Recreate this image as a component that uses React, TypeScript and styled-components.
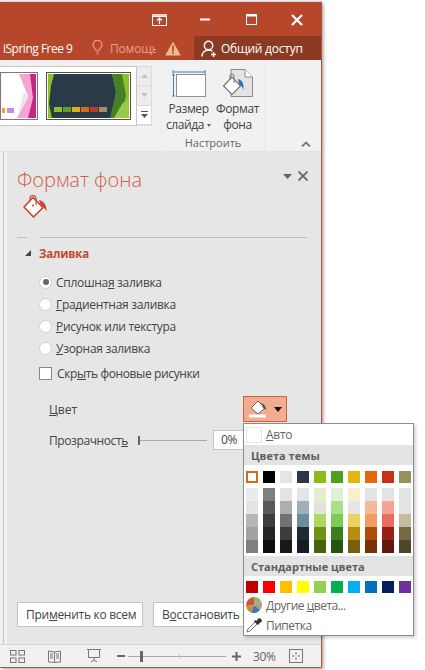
import React from "react";
import styled, { createGlobalStyle } from "styled-components";

const Global = createGlobalStyle`
  html, body { margin: 0; padding: 0; background: #fff; }
  body { font-family: "Open Sans", "Noto Sans", "Liberation Sans", sans-serif; }
  #root { width: 425px; height: 670px; }
  * { box-sizing: border-box; }
  u { text-underline-offset: 1px; text-decoration-thickness: 1px; }
`;

const Page = styled.div`
  position: relative;
  width: 425px;
  height: 670px;
  overflow: hidden;
  background: #fff;
  padding-top: 2px;
`;
const Win = styled.div`
  width: 322px;
  height: 666px;
  display: flex;
  flex-direction: column;
  border-right: 1px solid #a9553f;
  border-bottom: 1px solid #a9553f;
  border-top: 1px solid #b7472a;
  box-shadow: 2px 2px 3px rgba(90, 60, 50, 0.35), 0 -1px 2px rgba(90, 60, 50, 0.3);
  background: #e6e6e6;
`;
const TitleBar = styled.div`
  height: 33px;
  background: #b7472a;
  display: flex;
  align-items: center;
  justify-content: flex-end;
  padding-right: 1px;
  color: #fff;
`;
const WinButton = styled.div<{ $w: number }>`
  width: ${(p) => p.$w}px;
  display: flex;
  justify-content: center;
  align-items: center;
`;
const TabRow = styled.div`
  height: 24px;
  background: #b7472a;
  display: flex;
  align-items: stretch;
  font-size: 12px;
  color: #fff;
`;
const TabText = styled.div`
  width: 90px;
  padding-left: 3px;
  display: flex;
  align-items: center;
  letter-spacing: -0.5px;
  white-space: nowrap;
`;
const Tell = styled.div`
  width: 66px;
  display: flex;
  align-items: center;
  gap: 7px;
  padding-left: 2px;
  color: #e3a090;
  overflow: hidden;
  white-space: nowrap;
  letter-spacing: -0.2px;
  svg {
    flex: none;
  }
`;
const WarnBox = styled.div`
  width: 38px;
  display: flex;
  align-items: center;
  padding-left: 9px;
`;
const Share = styled.div`
  flex: 1;
  background: #8d3a22;
  display: flex;
  align-items: center;
  gap: 3px;
  padding-left: 7px;
  white-space: nowrap;
  letter-spacing: -0.25px;
  svg {
    flex: none;
  }
`;
const Ribbon = styled.div`
  height: 92px;
  background: #f1f1f1;
  display: flex;
  align-items: flex-start;
  border-bottom: 1px solid #e4e4e4;
`;
const Gallery = styled.div`
  margin-top: 6px;
  width: 137px;
  height: 60px;
  background: #fff;
  border: 1px solid #c6c6c6;
  border-left: none;
  display: flex;
  align-items: center;
  justify-content: flex-end;
  gap: 8px;
  padding-right: 5px;
`;
const ThumbFrame = styled.div<{ $w: number; $line: string }>`
  width: ${(p) => p.$w}px;
  height: 48px;
  border: 1px solid ${(p) => p.$line};
  padding: 1px;
  display: flex;
  overflow: hidden;
`;
const Scroller = styled.div`
  margin-top: 6px;
  width: 15px;
  height: 60px;
  display: flex;
  flex-direction: column;
  border: 1px solid #dcdcdc;
  border-left: none;
  color: #c4c4c4;
`;
const ScrollCell = styled.div<{ $active?: boolean }>`
  flex: 1;
  display: flex;
  align-items: center;
  justify-content: center;
  background: ${(p) => (p.$active ? "#fff" : "#ececec")};
  border-bottom: 1px solid #dcdcdc;
`;
const Group = styled.div`
  margin-left: 9px;
  height: 91px;
  width: 104px;
  border-left: 1px solid #ebebeb;
  border-right: 1px solid #ebebeb;
  display: flex;
  flex-direction: column;
  align-items: center;
`;
const GroupTools = styled.div`
  flex: 1;
  display: flex;
`;
const Tool = styled.div`
  width: 49px;
  display: flex;
  flex-direction: column;
  align-items: center;
  padding-top: 6px;
  font-size: 12px;
  line-height: 16px;
  color: #444;
  text-align: center;
  letter-spacing: -0.4px;
  white-space: nowrap;
`;
const ToolIcon = styled.div`
  height: 35px;
  display: flex;
  align-items: center;
  justify-content: center;
`;
const SmallCaret = styled.span`
  display: inline-block;
  width: 0;
  height: 0;
  margin-left: 3px;
  vertical-align: 2px;
  border-left: 2.5px solid transparent;
  border-right: 2.5px solid transparent;
  border-top: 3px solid #666;
`;
const GroupName = styled.div`
  font-size: 11px;
  line-height: 16px;
  color: #666;
`;
const Collapse = styled.div`
  margin: 81px 0 0 36px;
  color: #777;
  display: flex;
`;
const Body = styled.div`
  flex: 1;
  display: flex;
  min-height: 0;
`;
const Strip = styled.div`
  width: 7px;
  background: #f1f1f1;
  position: relative;
  &::after {
    content: "";
    position: absolute;
    left: 3px;
    top: 0;
    bottom: 0;
    width: 1px;
    background: #c3c3c3;
  }
`;
const Pane = styled.div`
  flex: 1;
  display: flex;
  flex-direction: column;
  padding: 0 14px 0 10px;
  background: #e6e6e6;
  color: #444;
  font-size: 12px;
`;
const PaneHead = styled.div`
  display: flex;
  justify-content: space-between;
  align-items: flex-start;
  height: 43px;
  padding-top: 14px;
`;
const PaneTitle = styled.div`
  font-size: 20px;
  line-height: 28px;
  font-weight: 300;
  color: #cf6048;
  letter-spacing: 0;
  white-space: nowrap;
`;
const PaneControls = styled.div`
  display: flex;
  align-items: center;
  gap: 6px;
  padding-top: 5px;
  margin-right: -1px;
  color: #666;
`;
const FillIconWrap = styled.div`
  height: 42px;
  padding-left: 5px;
  display: flex;
  align-items: flex-start;
`;
const Rule = styled.div`
  display: flex;
  gap: 13px;
  height: 1px;
`;
const RuleBit = styled.div<{ $w?: number }>`
  background: #bdbdbd;
  flex: ${(p) => (p.$w ? `0 0 ${p.$w}px` : "1")};
`;
const SectionHead = styled.div`
  display: flex;
  align-items: center;
  gap: 8px;
  height: 16px;
  margin: 7px 0 0 8px;
  font-weight: 700;
  color: #c2492d;
  font-size: 11.5px;
  letter-spacing: -0.2px;
`;
const Tri = styled.div`
  width: 0;
  height: 0;
  border-left: 6px solid transparent;
  border-bottom: 6px solid #444;
`;
const Options = styled.div`
  margin-top: 10px;
  padding-left: 22px;
  display: flex;
  flex-direction: column;
`;
const OptionRow = styled.div`
  height: 22px;
  display: flex;
  align-items: center;
  gap: 5px;
  white-space: nowrap;
  letter-spacing: -0.3px;
`;
const Radio = styled.div<{ $on?: boolean }>`
  width: 13px;
  height: 13px;
  border-radius: 50%;
  background: #fff;
  border: 1px solid #d0d0d0;
  display: flex;
  align-items: center;
  justify-content: center;
  margin-right: -1px;
  &::after {
    content: "";
    width: 6px;
    height: 6px;
    border-radius: 50%;
    background: ${(p) => (p.$on ? "#666" : "transparent")};
  }
`;
const CheckRow = styled(OptionRow)`
  margin-top: 3px;
  letter-spacing: -0.38px;
`;
const Check = styled.div`
  width: 13px;
  height: 13px;
  background: #fff;
  border: 1px solid #888;
`;
const ColorRow = styled.div`
  margin-top: 12px;
  height: 26px;
  padding-left: 32px;
  display: flex;
  align-items: center;
  justify-content: space-between;
  padding-right: 20px;
`;
const ColorButton = styled.div`
  width: 44px;
  height: 26px;
  background: #f5ab8f;
  border: 1px solid #c9643e;
  display: flex;
  align-items: center;
  justify-content: center;
  gap: 4px;
`;
const Caret = styled.div`
  width: 0;
  height: 0;
  border-left: 4px solid transparent;
  border-right: 4px solid transparent;
  border-top: 5px solid #111;
`;
const AlphaRow = styled.div`
  margin-top: 8px;
  height: 20px;
  padding-left: 32px;
  display: flex;
  align-items: center;
  letter-spacing: -0.4px;
`;
const AlphaLabel = styled.div`
  width: 89px;
  white-space: nowrap;
`;
const Slider = styled.div`
  width: 69px;
  height: 1px;
  background: #a9a9a9;
  position: relative;
  margin-right: 6px;
  &::before {
    content: "";
    position: absolute;
    left: 0;
    top: -4px;
    width: 2px;
    height: 9px;
    background: #666;
  }
`;
const AlphaInput = styled.div`
  width: 36px;
  height: 20px;
  background: #fff;
  border: 1px solid #c4c4c4;
  padding-left: 7px;
  line-height: 18px;
`;
const Actions = styled.div`
  margin-top: auto;
  margin-bottom: 17px;
  display: flex;
  gap: 10px;
  white-space: nowrap;
`;
const ActionButton = styled.div<{ $w: number }>`
  width: ${(p) => p.$w}px;
  height: 25px;
  flex: none;
  background: #fff;
  border: 1px solid #c4c4c4;
  display: flex;
  align-items: center;
  padding-left: 8px;
  letter-spacing: -0.28px;
`;
const Status = styled.div`
  height: 23px;
  background: #f1f1f1;
  border-top: 1px solid #d4d4d4;
  display: flex;
  align-items: center;
  color: #666;
`;
const StatusIcon = styled.div<{ $ml: number }>`
  margin-left: ${(p) => p.$ml}px;
  display: flex;
`;
const Zoom = styled.div`
  margin-left: 3px;
  width: 98px;
  height: 1px;
  background: #aaa;
  position: relative;
  &::before {
    content: "";
    position: absolute;
    left: 12px;
    top: -5px;
    width: 3px;
    height: 11px;
    background: #666;
  }
  &::after {
    content: "";
    position: absolute;
    left: 51px;
    top: -2px;
    width: 1px;
    height: 5px;
    background: #c0c0c0;
  }
`;
const Pct = styled.div`
  font-size: 12px;
  letter-spacing: -0.3px;
  margin-left: 12px;
`;
const Popup = styled.div`
  position: absolute;
  left: 243px;
  top: 423px;
  width: 171px;
  height: 213px;
  background: #fff;
  border: 1px solid #8c8c8c;
  box-shadow: 2px 2px 3px rgba(0, 0, 0, 0.18);
  display: flex;
  flex-direction: column;
  font-size: 12px;
  color: #666;
`;
const AutoRow = styled.div`
  height: 21px;
  display: flex;
  align-items: center;
  gap: 4px;
  padding-left: 2px;
  letter-spacing: -0.3px;
`;
const AutoBox = styled.div`
  width: 16px;
  height: 16px;
  border: 1px solid #e6e6e6;
`;
const MenuHead = styled.div`
  height: 20px;
  background: #e3e3e3;
  display: flex;
  align-items: center;
  padding-left: 7px;
  font-weight: 700;
  font-size: 11px;
  color: #5e5e5e;
`;
const SwatchRow = styled.div<{ $top: number }>`
  margin-top: ${(p) => p.$top}px;
  padding-left: 2px;
  display: flex;
  gap: 5px;
`;
const Swatch = styled.div<{ $c: string; $sel?: boolean }>`
  width: 12px;
  height: 12px;
  flex: none;
  background: ${(p) => p.$c};
  border: ${(p) => (p.$sel ? "2px solid #d9691f" : "none")};
`;
const ShadeGrid = styled.div`
  margin: 5px 0 3px;
  padding-left: 2px;
  display: flex;
  gap: 5px;
`;
const ShadeColumn = styled.div`
  width: 12px;
  display: flex;
  flex-direction: column;
`;
const Shade = styled.div<{ $c: string }>`
  height: 13px;
  background: ${(p) => p.$c};
`;
const MenuItem = styled.div`
  height: 20px;
  display: flex;
  align-items: center;
  gap: 4px;
  padding-left: 2px;
  letter-spacing: -0.5px;
  white-space: nowrap;
`;
const MenuItems = styled.div`
  margin-top: 2px;
  display: flex;
  flex-direction: column;
`;

const Bucket = ({ size = 26, line = "#c8492e", fill = "#fff" }: { size?: number; line?: string; fill?: string }) => (
  <svg width={size} height={size} viewBox="0 0 26 26" fill="none">
    <path d="M11 2.5 L2 12 L11.5 22 L21 12.5 Z" fill={fill} stroke={line} strokeWidth="1.7" strokeLinejoin="round" />
    <path d="M8 6.5 V3.5 a3 3 0 0 1 6 0 V10" stroke={line} strokeWidth="1.2" />
    <circle cx="11" cy="10.5" r="1.1" fill={line} />
    <path d="M17 5 C22 6 25 10 24.5 17 C24 14 21.5 12.5 19.5 12 Z" fill={line} />
  </svg>
);

const themeTop = ["#fff", "#000", "#e5e5e5", "#2a3846", "#8cbb17", "#4fa01f", "#e3b50f", "#e9660f", "#c9301a", "#9a8e5a"];
const shades = [
  ["#e9ecef", "#e4e4e4", "#b6b6b6", "#a3a3a3", "#7f7f7f"],
  ["#7f7f7f", "#595959", "#3c3c3c", "#242424", "#0d0d0d"],
  ["#e3e3e3", "#aeaeae", "#727272", "#3c3c3c", "#181818"],
  ["#e2e4e6", "#9db1bd", "#6c8ca0", "#1e2b36", "#141d26"],
  ["#e5efcd", "#e2e4dc", "#b0d860", "#6c9316", "#47610e"],
  ["#dff0d6", "#a9e088", "#7dcc52", "#3c7d1e", "#275313"],
  ["#fbeecd", "#e4e6e8", "#ecd060", "#b58d12", "#7a5f0c"],
  ["#e2e3e5", "#f6b994", "#f09c64", "#b04c0a", "#763307"],
  ["#e2e3e5", "#f4a497", "#ea6d5d", "#962213", "#64170d"],
  ["#e3e3e3", "#e3e3e3", "#c4bc9c", "#75693f", "#4d462b"],
];
const standard = ["#c00000", "#ff0000", "#ffc000", "#ffff00", "#92d050", "#00b050", "#00b0f0", "#0070c0", "#002060", "#7030a0"];
const strip = ["#8fbf27", "#5aa02a", "#dcb21c", "#dd6a1c", "#bf3a20", "#a09268"];

export default function App() {
  return (
    <Page>
      <Global />
      <Win>
        <TitleBar>
          <WinButton $w={46}>
            <svg width="15" height="12" viewBox="0 0 15 12" fill="none" stroke="#fff">
              <rect x="0.5" y="2.5" width="14" height="9" />
              <path d="M0 1 H15" strokeWidth="1.5" />
              <path d="M7.5 10 V4 M5 6.5 L7.5 4 L10 6.5" strokeWidth="1.2" />
            </svg>
          </WinButton>
          <WinButton $w={46}>
            <svg width="10" height="3" viewBox="0 0 10 3">
              <rect width="10" height="2" y="0.5" fill="#fff" />
            </svg>
          </WinButton>
          <WinButton $w={46}>
            <svg width="11" height="11" viewBox="0 0 11 11" fill="none" stroke="#fff">
              <rect x="0.5" y="0.5" width="10" height="10" />
              <path d="M0 1.5 H11" strokeWidth="2" />
            </svg>
          </WinButton>
          <WinButton $w={46}>
            <svg width="12" height="12" viewBox="0 0 12 12" stroke="#fff" strokeWidth="2.2">
              <path d="M1 1 L11 11 M11 1 L1 11" />
            </svg>
          </WinButton>
        </TitleBar>
        <TabRow>
          <TabText>iSpring Free 9</TabText>
          <Tell>
            <svg width="11" height="16" viewBox="0 0 11 16" fill="none" stroke="#e3a090" strokeWidth="1.2">
              <path d="M3.5 10 C3 8 1 7 1 4.8 a4.5 4.5 0 0 1 9 0 C10 7 8 8 7.5 10 Z" />
              <path d="M4 12 H7 M4.5 14 H6.5" />
            </svg>
            <span>Помощь</span>
          </Tell>
          <WarnBox>
            <svg width="16" height="15" viewBox="0 0 16 15">
              <path d="M8 0.5 L15.8 14.5 H0.2 Z" fill="#eeb98b" />
              <rect x="7.2" y="4.5" width="1.6" height="6" fill="#9a4a26" />
              <rect x="7.2" y="11.3" width="1.6" height="1.6" fill="#9a4a26" />
            </svg>
          </WarnBox>
          <Share>
            <svg width="17" height="17" viewBox="0 0 17 17" fill="none" stroke="#fff" strokeWidth="1.4">
              <circle cx="7.5" cy="5.5" r="4.2" />
              <path d="M1 16.5 C1 12.5 4 10 7.5 10 C9 10 10.4 10.4 11.4 11.2" />
              <path d="M12.5 12 V17 M10 14.5 H15" />
            </svg>
            <span>Общий доступ</span>
          </Share>
        </TabRow>
        <Ribbon>
          <Gallery>
            <ThumbFrame $w={38} $line="#8d6d80">
              <svg width="34" height="44" viewBox="0 0 34 44">
                <rect width="34" height="44" fill="#fff" />
                <path d="M17 0 H34 V44 H15 L26 22 Z" fill="#f4a6d0" />
                <path d="M28 0 H34 V44 H26 L31 24 Z" fill="#c4277f" />
                <path d="M15 44 L26 24 L22 18 L18 34 Z" fill="#ebe5e8" />
                <rect x="0" y="34" width="3" height="5" fill="#f0a030" />
                <rect x="5" y="34" width="7" height="5" fill="#c090e0" />
              </svg>
            </ThumbFrame>
            <ThumbFrame $w={85} $line="#4c5a3a">
              <svg width="81" height="44" viewBox="0 0 81 44">
                <rect width="81" height="44" fill="#8fc029" />
                <path d="M6 0 H64 L68 18 L64 44 H4 L1 30 L3 12 Z" fill="#2b3a48" />
                <path d="M64 0 H74 L78 22 L72 44 H62 L68 18 Z" fill="#467f2a" />
                <path d="M66 44 L74 30 L81 24 V44 Z" fill="#9cc84a" />
                {strip.map((c, i) => (
                  <rect key={c} x={6 + i * 9} y="33" width="8" height="5" fill={c} />
                ))}
              </svg>
            </ThumbFrame>
          </Gallery>
          <Scroller>
            <ScrollCell>
              <svg width="7" height="4" viewBox="0 0 7 4" fill="currentColor"><path d="M3.5 0 L7 4 H0 Z" /></svg>
            </ScrollCell>
            <ScrollCell>
              <svg width="7" height="4" viewBox="0 0 7 4" fill="currentColor"><path d="M0 0 H7 L3.5 4 Z" /></svg>
            </ScrollCell>
            <ScrollCell $active>
              <svg width="7" height="7" viewBox="0 0 7 7" fill="#555"><rect width="7" height="1" /><path d="M0 3 H7 L3.5 7 Z" /></svg>
            </ScrollCell>
          </Scroller>
          <Group>
            <GroupTools>
              <Tool>
                <ToolIcon>
                  <svg width="34" height="30" viewBox="0 0 34 30" fill="none">
                    <rect x="4.5" y="5.5" width="29" height="22" fill="#fff" stroke="#8f8f8f" />
                    <path d="M1.5 3 H33 M1 1 V5 M33 1 V5 M1.5 5 V27 M0 6 H3 M0 27 H3" stroke="#4d7ea8" strokeWidth="1" />
                  </svg>
                </ToolIcon>
                <span>Размер</span>
                <span>слайда<SmallCaret /></span>
              </Tool>
              <Tool>
                <ToolIcon>
                  <svg width="32" height="32" viewBox="0 0 32 32" fill="none">
                    <path d="M9 1.5 H23 L30.5 9 V28.5 H9 Z" fill="#e4e4e4" stroke="#8a8a8a" />
                    <path d="M23 1.5 V9 H30.5" fill="#fff" stroke="#8a8a8a" />
                    <path d="M10 9 L1.5 18 L10 26.5 L18.5 18 Z" fill="#fff" stroke="#777" strokeWidth="1.2" />
                    <path d="M8 12 V8 a2 2 0 0 1 4 0 V15" stroke="#777" />
                    <path d="M16 11 C20 12 22 15 21.5 22 C20.5 19 19 17.5 17.5 17 Z" fill="#2f6fb5" />
                  </svg>
                </ToolIcon>
                <span>Формат</span>
                <span>фона</span>
              </Tool>
            </GroupTools>
            <GroupName>Настроить</GroupName>
          </Group>
          <Collapse>
            <svg width="10" height="6" viewBox="0 0 10 6" fill="none" stroke="currentColor" strokeWidth="1.8">
              <path d="M1 5.5 L5 1.5 L9 5.5" />
            </svg>
          </Collapse>
        </Ribbon>
        <Body>
          <Strip />
          <Pane>
            <PaneHead>
              <PaneTitle>Формат фона</PaneTitle>
              <PaneControls>
                <svg width="9" height="5" viewBox="0 0 9 5" fill="currentColor"><path d="M0 0 H9 L4.5 5 Z" /></svg>
                <svg width="10" height="10" viewBox="0 0 10 10" stroke="currentColor" strokeWidth="1.8"><path d="M0.5 0.5 L9.5 9.5 M9.5 0.5 L0.5 9.5" /></svg>
              </PaneControls>
            </PaneHead>
            <FillIconWrap>
              <Bucket />
            </FillIconWrap>
            <Rule>
              <RuleBit $w={10} />
              <RuleBit />
            </Rule>
            <SectionHead>
              <Tri />
              <span>Заливка</span>
            </SectionHead>
            <Options>
              <OptionRow>
                <Radio $on />
                <span>Сплошна<u>я</u> заливка</span>
              </OptionRow>
              <OptionRow>
                <Radio />
                <span><u>Г</u>радиентная заливка</span>
              </OptionRow>
              <OptionRow>
                <Radio />
                <span><u>Р</u>исунок или текстура</span>
              </OptionRow>
              <OptionRow>
                <Radio />
                <span><u>У</u>зорная заливка</span>
              </OptionRow>
              <CheckRow>
                <Check />
                <span>Скр<u>ы</u>ть фоновые рисунки</span>
              </CheckRow>
            </Options>
            <ColorRow>
              <span><u>Ц</u>вет</span>
              <ColorButton>
                <svg width="22" height="18" viewBox="0 0 22 18">
                  <path d="M10 1 L3 8 L10 14 L17 8 Z" fill="#fff" stroke="#555" strokeWidth="0.9" />
                  <path d="M13 3 C16 4 18 6 18 10 L15 8 Z" fill="#555" />
                  <rect x="1" y="14.5" width="17" height="3" fill="#fff" />
                </svg>
                <Caret />
              </ColorButton>
            </ColorRow>
            <AlphaRow>
              <AlphaLabel>Прозрачност<u>ь</u></AlphaLabel>
              <Slider />
              <AlphaInput>0%</AlphaInput>
            </AlphaRow>
            <Actions>
              <ActionButton $w={126}>При<u>м</u>енить ко всем</ActionButton>
              <ActionButton $w={130}>В<u>о</u>сстановить фон</ActionButton>
            </Actions>
          </Pane>
        </Body>
        <Status>
          <StatusIcon $ml={10}>
            <svg width="15" height="13" viewBox="0 0 15 13" fill="none" stroke="#777">
              <rect x="0.5" y="0.5" width="5.5" height="4.5" /><rect x="9" y="0.5" width="5.5" height="4.5" />
              <rect x="0.5" y="8" width="5.5" height="4.5" /><rect x="9" y="8" width="5.5" height="4.5" />
            </svg>
          </StatusIcon>
          <StatusIcon $ml={23}>
            <svg width="13" height="13" viewBox="0 0 13 13" fill="none" stroke="#777">
              <path d="M0.5 1 L6.5 2 L12.5 1 V12 L6.5 12.5 L0.5 12 Z M6.5 2 V12.5 M2 4 H5 M2 6 H5 M2 8 H5 M8 4 H11 M8 6 H11 M8 8 H11" />
            </svg>
          </StatusIcon>
          <StatusIcon $ml={26}>
            <svg width="14" height="14" viewBox="0 0 14 14" fill="none" stroke="#777">
              <path d="M0 0.5 H14 M1.5 1 V8.5 H12.5 V1 M7 8.5 V11 M4 13 L7 11 L10 13" />
            </svg>
          </StatusIcon>
          <StatusIcon $ml={16}>
            <svg width="8" height="3" viewBox="0 0 8 3"><rect width="8" height="2" fill="#666" /></svg>
          </StatusIcon>
          <Zoom />
          <StatusIcon $ml={6}>
            <svg width="9" height="9" viewBox="0 0 9 9" stroke="#666" strokeWidth="2"><path d="M4.5 0 V9 M0 4.5 H9" /></svg>
          </StatusIcon>
          <Pct>30%</Pct>
          <StatusIcon $ml={13}>
            <svg width="14" height="14" viewBox="0 0 14 14" fill="none" stroke="#777">
              <rect x="0.5" y="0.5" width="13" height="13" />
              <path d="M7 3 V5.5 M7 8.5 V11 M3 7 H5.5 M8.5 7 H11" />
            </svg>
          </StatusIcon>
        </Status>
      </Win>
      <Popup>
        <AutoRow>
          <AutoBox />
          <span><u>А</u>вто</span>
        </AutoRow>
        <MenuHead>Цвета темы</MenuHead>
        <SwatchRow $top={6}>
          {themeTop.map((c, i) => (
            <Swatch key={c} $c={c} $sel={i === 0} />
          ))}
        </SwatchRow>
        <ShadeGrid>
          {shades.map((col, i) => (
            <ShadeColumn key={i}>
              {col.map((c, j) => (
                <Shade key={j} $c={c} />
              ))}
            </ShadeColumn>
          ))}
        </ShadeGrid>
        <MenuHead>Стандартные цвета</MenuHead>
        <SwatchRow $top={5}>
          {standard.map((c) => (
            <Swatch key={c} $c={c} />
          ))}
        </SwatchRow>
        <MenuItems>
          <MenuItem>
            <svg width="16" height="16" viewBox="0 0 16 16">
              <path d="M8 8 L8 0 A8 8 0 0 1 15.5 5 Z" fill="#9ab56a" />
              <path d="M8 8 L15.5 5 A8 8 0 0 1 14 13 Z" fill="#a9a08a" />
              <path d="M8 8 L14 13 A8 8 0 0 1 5 15.5 Z" fill="#3f78b5" />
              <path d="M8 8 L5 15.5 A8 8 0 0 1 0.2 9 Z" fill="#c98a3c" />
              <path d="M8 8 L0.2 9 A8 8 0 0 1 8 0 Z" fill="#c9573e" />
            </svg>
            <span>Другие <u>ц</u>вета...</span>
          </MenuItem>
          <MenuItem>
            <svg width="16" height="16" viewBox="0 0 16 16" fill="none">
              <path d="M1 15 L2 12 L9 5 L11 7 L4 14 Z" stroke="#777" fill="#fff" />
              <path d="M8.5 3.5 L12.5 7.5 M10 5.5 L13 2 A1.8 1.8 0 0 1 15 4 L11.5 7" stroke="#333" strokeWidth="1.6" fill="#333" />
            </svg>
            <span>Пипетка</span>
          </MenuItem>
        </MenuItems>
      </Popup>
    </Page>
  );
}
